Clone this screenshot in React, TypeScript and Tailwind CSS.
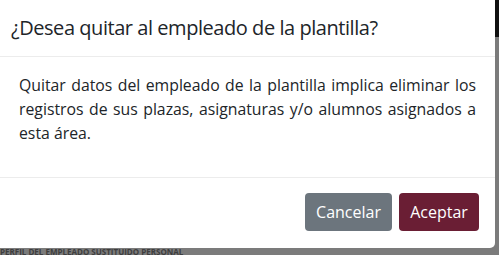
export default function App() {
  return (
    <div className="relative h-[255px] w-[499px] overflow-hidden bg-[#7b7b7b] font-['Open_Sans',sans-serif]">
      {/* backdrop strip on the right */}
      <div className="absolute right-0 top-0 h-[37px] w-[4px] bg-[#111]" />
      <div className="absolute bottom-0 left-0 flex h-[7px] items-center">
        <span className="text-[8px] leading-[7px] font-bold text-[#3e3e3e]">
          PERFIL DEL EMPLEADO SUSTITUIDO PERSONAL
        </span>
      </div>

      <div className="flex h-[248px] w-[495px] flex-col rounded-br-[5px] bg-white text-[#212529]">
        <div className="flex h-[57px] items-center border-b border-[#ececec] pl-[11px]">
          <h5 className="text-[20px] leading-[1.2] tracking-[-0.45px]">
            ¿Desea quitar al empleado de la plantilla?
          </h5>
        </div>
        <div className="px-[19px] pt-[16px] pb-[16px]">
          <p className="mb-[16px] text-justify text-[15.8px] leading-[24px]">
            Quitar datos del empleado de la plantilla implica eliminar los registros de sus plazas,
            asignaturas y/o alumnos asignados a esta área.
          </p>
        </div>
        <div className="flex flex-1 items-start justify-end gap-[7px] border-t border-[#ececec] pr-[16px] pt-[15px]">
          <button className="h-[38px] w-[87px] rounded-[4px] bg-[#6c757d] text-[16px] text-white">
            Cancelar
          </button>
          <button className="h-[38px] w-[80px] rounded-[4px] bg-[#6a1e34] text-[16px] text-white">
            Aceptar
          </button>
        </div>
      </div>
    </div>
  );
}
